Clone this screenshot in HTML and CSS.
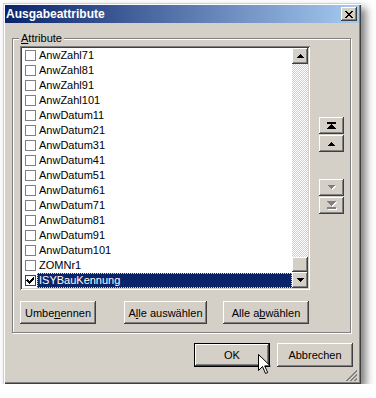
FILE: index.html
```
<!DOCTYPE html>
<html>
<head>
<meta charset="utf-8">
<link rel="stylesheet" href="styles.css">
</head>
<body>
<div class="window">
  <div class="titlebar">
    <span class="title">Ausgabeattribute</span>
    <div class="close btn3d">
      <svg width="8" height="7" viewBox="0 0 8 7" shape-rendering="crispEdges"><path d="M0 0h2v1h1v1h2v-1h1v-1h2v1h-1v1h-1v1h-1v1h1v1h1v1h1v1h-2v-1h-1v-1h-2v1h-1v1h-2v-1h1v-1h1v-1h1v-1h-1v-1h-1z" fill="#000"/></svg>
    </div>
  </div>
  <div class="client">
    <fieldset class="group">
      <legend><u>A</u>ttribute</legend>
      <div class="list-row">
        <div class="listbox">
          <div class="items">
            <div class="row"><span class="cb"></span><span class="lbl">AnwZahl71</span></div>
            <div class="row"><span class="cb"></span><span class="lbl">AnwZahl81</span></div>
            <div class="row"><span class="cb"></span><span class="lbl">AnwZahl91</span></div>
            <div class="row"><span class="cb"></span><span class="lbl">AnwZahl101</span></div>
            <div class="row"><span class="cb"></span><span class="lbl">AnwDatum11</span></div>
            <div class="row"><span class="cb"></span><span class="lbl">AnwDatum21</span></div>
            <div class="row"><span class="cb"></span><span class="lbl">AnwDatum31</span></div>
            <div class="row"><span class="cb"></span><span class="lbl">AnwDatum41</span></div>
            <div class="row"><span class="cb"></span><span class="lbl">AnwDatum51</span></div>
            <div class="row"><span class="cb"></span><span class="lbl">AnwDatum61</span></div>
            <div class="row"><span class="cb"></span><span class="lbl">AnwDatum71</span></div>
            <div class="row"><span class="cb"></span><span class="lbl">AnwDatum81</span></div>
            <div class="row"><span class="cb"></span><span class="lbl">AnwDatum91</span></div>
            <div class="row"><span class="cb"></span><span class="lbl">AnwDatum101</span></div>
            <div class="row"><span class="cb"></span><span class="lbl">ZOMNr1</span></div>
            <div class="row"><span class="cb checked"><svg width="9" height="9" viewBox="0 0 9 9" shape-rendering="crispEdges"><path d="M1 3h1v1h1v1h1v-1h1v-1h1v-1h1v-1h1v3h-1v1h-1v1h-1v1h-1v1h-1v-1h-1v-1h-1v-1h-1z" fill="#000"/></svg></span><span class="lbl sel">ISYBauKennung</span></div>
          </div>
          <div class="vscroll">
            <div class="sbtn btn3d"><svg width="7" height="4" viewBox="0 0 7 4" shape-rendering="crispEdges"><path d="M3 0h1v1h1v1h1v1h1v1h-7v-1h1v-1h1v-1h1z" fill="#000"/></svg></div>
            <div class="track"></div>
            <div class="thumb btn3d"></div>
            <div class="sbtn btn3d"><svg width="7" height="4" viewBox="0 0 7 4" shape-rendering="crispEdges"><path d="M0 0h7v1h-1v1h-1v1h-1v1h-1v-1h-1v-1h-1v-1h-1z" fill="#000"/></svg></div>
          </div>
        </div>
        <div class="side">
          <div class="mbtn btn3d"><svg width="9" height="8" viewBox="0 0 9 8" shape-rendering="crispEdges"><path d="M0 0h9v2h-9z M4 2h1v1h1v1h1v1h1v1h1v1h-9v-1h1v-1h1v-1h1v-1h1z" fill="#000"/></svg></div>
          <div class="mbtn btn3d"><svg width="7" height="4" viewBox="0 0 7 4" shape-rendering="crispEdges"><path d="M3 0h1v1h1v1h1v1h1v1h-7v-1h1v-1h1v-1h1z" fill="#000"/></svg></div>
          <div class="mbtn btn3d gap-top"><svg width="8" height="5" viewBox="0 0 8 5" shape-rendering="crispEdges"><path d="M1 1h7v1h-1v1h-1v1h-1v1h-1v-1h-1v-1h-1v-1h-1z" fill="#fff"/><path d="M0 0h7v1h-1v1h-1v1h-1v1h-1v-1h-1v-1h-1v-1h-1z" fill="#808080"/></svg></div>
          <div class="mbtn btn3d"><svg width="10" height="9" viewBox="0 0 10 9" shape-rendering="crispEdges"><path d="M1 1h9v1h-1v1h-1v1h-1v1h-1v1h-1v-1h-1v-1h-1v-1h-1v-1h-1z M1 7h9v2h-9z" fill="#fff"/><path d="M0 0h9v1h-1v1h-1v1h-1v1h-1v1h-1v-1h-1v-1h-1v-1h-1v-1h-1z M0 6h9v2h-9z" fill="#808080"/></svg></div>
        </div>
      </div>
      <div class="btn-row">
        <div class="pbtn btn3d w-umb">Umbe<u>n</u>ennen</div>
        <div class="pbtn btn3d w-aus">A<u>l</u>le auswählen</div>
        <div class="pbtn btn3d w-ab">Alle a<u>b</u>wählen</div>
      </div>
    </fieldset>
    <div class="footer">
      <div class="pbtn default">OK</div>
      <div class="pbtn btn3d">Abbrechen</div>
    </div>
    <svg class="grip" width="12" height="12" viewBox="0 0 12 12" shape-rendering="crispEdges">
      <path d="M11 0v1h-1v1h-1v1h-1v1h-1v1h-1v1h-1v1h-1v1h-1v1h-1v1h-1v1h-1v1h1v-1h1v-1h1v-1h1v-1h1v-1h1v-1h1v-1h1v-1h1v-1h1v-1h1v-1z" fill="#fff"/>
      <path d="M11 1v2h-1v1h-1v1h-1v1h-1v1h-1v1h-1v1h-1v1h-1v1h-1v1h-2v-1h1v-1h1v-1h1v-1h1v-1h1v-1h1v-1h1v-1h1v-1h1v-1z M11 5v2h-1v1h-1v1h-1v1h-1v1h-1v1h-2v-1h1v-1h1v-1h1v-1h1v-1h1v-1z M11 9v2h-1v1h-2v-1h1v-1h1v-1z" fill="#808080"/>
    </svg>
  </div>
</div>
<svg class="cursor" width="13" height="21" viewBox="0 0 13 21" shape-rendering="crispEdges">
  <path d="M0.5 0.5v16l4-4 3 7 2.2-1-3-6.6h5.6z" fill="#fff" stroke="#000" stroke-width="1" shape-rendering="geometricPrecision"/>
</svg>
</body>
</html>
```
FILE: styles.css
```
* { box-sizing: border-box; }
body {
  margin: 0;
  background: #fff;
  font-family: "Liberation Sans", Arial, sans-serif;
  font-size: 11px;
  color: #000;
  position: relative;
}
.window {
  margin: 3px 0 0 3px;
  width: 358px;
  height: 381px;
  background: #d4d0c8;
  padding: 2px;
  display: flex;
  flex-direction: column;
  position: relative;
  box-shadow: inset 1px 1px #d4d0c8, inset 2px 2px #fff, inset -1px -1px #404040, inset -2px -2px #808080, 5px 5px 8px rgba(0,0,0,0.5);
}
.btn3d {
  background: #d4d0c8;
  box-shadow: inset -1px -1px #404040, inset 1px 1px #fff, inset -2px -2px #808080;
}
.titlebar {
  height: 18px;
  background: linear-gradient(to right, #0a246a, #a6caf0);
  display: flex;
  align-items: center;
  justify-content: space-between;
  padding: 0 2px 0 1px;
}
.title {
  color: #fff;
  font-weight: bold;
  font-size: 12px;
  font-family: "Liberation Sans", Arial, sans-serif;
}
.close {
  width: 16px;
  height: 14px;
  display: flex;
  align-items: center;
  justify-content: center;
  padding-right: 1px;
}
.client {
  flex: 1;
  display: flex;
  flex-direction: column;
  padding: 9px 0 0 7px;
  position: relative;
}
.group {
  margin: 0;
  width: 339px;
  padding: 1px 6px 8px 7px;
  border: 1px solid #808080;
  box-shadow: inset 1px 1px #fff, 1px 1px #fff;
  min-width: 0;
}
.group legend {
  padding: 0 2px;
  margin-left: -1px;
  line-height: 13px;
  background: #d4d0c8;
}
.list-row {
  display: flex;
  gap: 9px;
}
.listbox {
  width: 290px;
  height: 244px;
  padding: 2px;
  background: #fff;
  display: flex;
  box-shadow: inset 1px 1px #808080, inset -1px -1px #fff, inset 2px 2px #404040, inset -2px -2px #d4d0c8;
}
.items {
  flex: 1;
  display: flex;
  flex-direction: column;
}
.row {
  height: 15px;
  display: flex;
  align-items: center;
  padding-left: 3px;
}
.cb {
  width: 11px;
  height: 11px;
  border: 1px solid #808080;
  background: #fff;
  display: flex;
  align-items: center;
  justify-content: center;
}
.cb.checked { border-color: #404040; }
.lbl {
  flex: 1;
  height: 15px;
  line-height: 15px;
  padding: 0 2px;
  margin-left: 1px;
  white-space: nowrap;
}
.lbl.sel {
  background: #0a246a;
  color: #fff;
  outline: 1px dotted #e8d890;
  outline-offset: -1px;
}
.vscroll {
  width: 16px;
  display: flex;
  flex-direction: column;
}
.sbtn {
  height: 16px;
  display: flex;
  align-items: center;
  justify-content: center;
}
.track {
  flex: 1;
  background: repeating-conic-gradient(#d4d0c8 0 25%, #fff 0 50%) 0 0 / 2px 2px;
}
.thumb { height: 15px; }
.side {
  display: flex;
  flex-direction: column;
  padding-top: 71px;
  gap: 1px;
}
.mbtn {
  width: 25px;
  height: 17px;
  display: flex;
  align-items: center;
  justify-content: center;
}
.mbtn.gap-top { margin-top: 26px; }
.btn-row {
  display: flex;
  margin-top: 11px;
}
.pbtn {
  height: 23px;
  display: flex;
  align-items: center;
  justify-content: center;
  white-space: nowrap;
}
.w-umb { width: 76px; }
.w-aus { width: 83px; margin-left: 28px; }
.w-ab { width: 86px; margin-left: 16px; }
.footer {
  display: flex;
  justify-content: flex-end;
  gap: 7px;
  padding-right: 6px;
  margin-top: 10px;
}
.footer .pbtn { width: 76px; height: 24px; }
.default {
  background: #d4d0c8;
  border: 1px solid #000;
  box-shadow: inset -1px -1px #404040, inset 1px 1px #fff, inset -2px -2px #808080;
}
.grip {
  position: absolute;
  right: 1px;
  bottom: 1px;
}
.cursor {
  position: absolute;
  left: 258px;
  top: 354px;
}
```
